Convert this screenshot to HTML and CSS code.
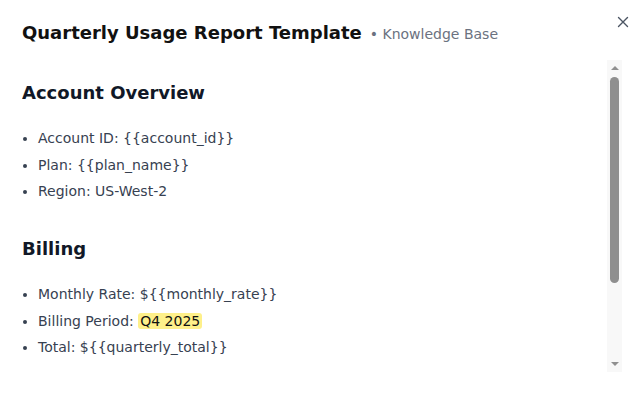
FILE: index.html
```html
<!DOCTYPE html>
<html lang="en">
<head>
<meta charset="utf-8">
<title>Quarterly Usage Report Template</title>
<link rel="stylesheet" href="styles.css">
</head>
<body>
<div class="modal">
  <header class="modal-header">
    <h1 class="modal-title">Quarterly Usage Report Template</h1>
    <span class="modal-meta">• Knowledge Base</span>
  </header>
  <button class="close-btn" aria-label="Close">
    <svg width="12" height="12" viewBox="0 0 12 12"><path d="M1.5 1.5 L10.5 10.5 M10.5 1.5 L1.5 10.5" stroke="#4b5563" stroke-width="1.4" fill="none" stroke-linecap="round"/></svg>
  </button>
  <div class="modal-body">
    <div class="body-content">
      <section class="doc-section">
        <h2 class="doc-heading">Account Overview</h2>
        <ul class="doc-list">
          <li>Account ID: {{account_id}}</li>
          <li>Plan: {{plan_name}}</li>
          <li>Region: US-West-2</li>
        </ul>
      </section>
      <section class="doc-section">
        <h2 class="doc-heading">Billing</h2>
        <ul class="doc-list">
          <li>Monthly Rate: ${{monthly_rate}}</li>
          <li>Billing Period: <mark class="hl">Q4 2025</mark></li>
          <li>Total: ${{quarterly_total}}</li>
        </ul>
      </section>
    </div>
    <div class="scrollbar" aria-hidden="true">
      <div class="sb-btn">
        <svg width="8" height="5" viewBox="0 0 8 5"><path d="M0 5 L4 1 L8 5 Z" fill="#909090"/></svg>
      </div>
      <div class="sb-track"><div class="sb-thumb"></div></div>
      <div class="sb-btn">
        <svg width="8" height="5" viewBox="0 0 8 5"><path d="M0 0 L4 4 L8 0 Z" fill="#909090"/></svg>
      </div>
    </div>
  </div>
</div>
</body>
</html>
```
FILE: styles.css
```css
* { box-sizing: border-box; }
html, body { margin: 0; padding: 0; background: #ffffff; }
body {
  font-family: "DejaVu Sans", Verdana, sans-serif;
  color: #374151;
}
.modal {
  position: relative;
  width: 643px;
  height: 394px;
  background: #ffffff;
}
.modal-header {
  height: 60px;
  padding: 21px 60px 0 22px;
  display: flex;
  align-items: baseline;
  gap: 8px;
}
.modal-title {
  margin: 0;
  font-size: 18px;
  line-height: 23px;
  font-weight: 700;
  color: #111111;
}
.modal-meta {
  font-size: 14px;
  color: #6b7280;
}
.close-btn {
  position: absolute;
  top: 14px;
  right: 12px;
  width: 16px;
  height: 16px;
  padding: 0;
  border: 0;
  background: transparent;
  display: flex;
  align-items: center;
  justify-content: center;
}
.modal-body {
  height: 312px;
  margin: 0 21px 0 22px;
  display: flex;
}
.body-content {
  flex: 1;
  overflow: hidden;
  padding-top: 21px;
}
.scrollbar {
  width: 15px;
  flex: none;
  background: #f8f8f8;
  display: flex;
  flex-direction: column;
}
.sb-btn {
  height: 15px;
  flex: none;
  display: flex;
  align-items: center;
  justify-content: center;
}
.sb-track {
  flex: 1;
  padding-top: 2px;
  display: flex;
  justify-content: center;
}
.sb-thumb {
  width: 9px;
  height: 206px;
  border-radius: 5px;
  background: #8f8f8f;
}
.doc-section { margin-bottom: 35px; }
.doc-section:last-child { margin-bottom: 0; }
.doc-heading {
  margin: 0;
  font-size: 18px;
  line-height: 23px;
  font-weight: 700;
  color: #111827;
}
.doc-list {
  margin: 23px 0 0;
  padding-left: 16px;
  font-size: 14px;
  line-height: 22px;
}
.doc-list li { margin-bottom: 4.5px; }
.hl {
  background: #fef08a;
  color: #111111;
  border-radius: 3px;
  padding: 0 2px;
}
```
